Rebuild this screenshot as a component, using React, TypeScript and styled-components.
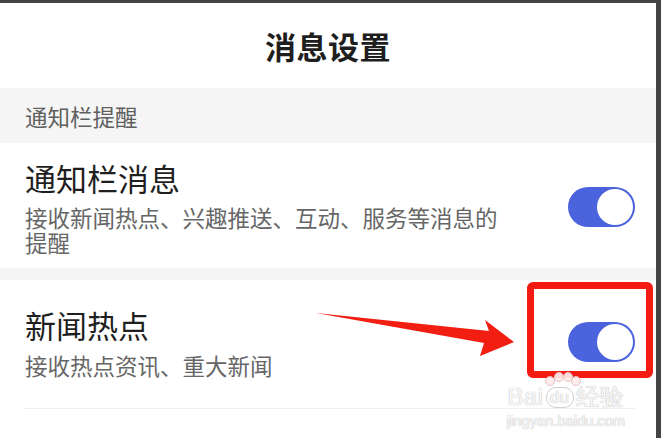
import styled, { createGlobalStyle } from "styled-components";

const GlobalStyle = createGlobalStyle`
  html, body {
    margin: 0;
    padding: 0;
    background: #ffffff;
  }
  body {
    font-family: "Noto Sans CJK SC", "Noto Sans", sans-serif;
  }
`;

export default function App() {
  return (
    <Screen>
      <GlobalStyle />
      <Header>
        <Title>消息设置</Title>
      </Header>

      <SectionLabel>通知栏提醒</SectionLabel>

      <SettingRow $padTop={15} $padBottom={13}>
        <RowText>
          <RowTitle>通知栏消息</RowTitle>
          <RowDesc $gap={7}>接收新闻热点、兴趣推送、互动、服务等消息的提醒</RowDesc>
        </RowText>
        <Toggle>
          <Knob />
        </Toggle>
      </SettingRow>

      <GroupGap />

      <SettingRow $padTop={25} $padBottom={30} $divider>
        <RowText>
          <RowTitle>新闻热点</RowTitle>
          <RowDesc $gap={8}>接收热点资讯、重大新闻</RowDesc>
        </RowText>
        <Toggle>
          <Knob />
        </Toggle>
      </SettingRow>

      <HighlightBox />
      <Arrow viewBox="0 0 661 438">
        <polygon points="316,313 489,331 485,320 514,342 480,356 484,343" />
      </Arrow>

      <Watermark>
        <Paw>
          <svg width="38" height="14" viewBox="0 0 38 14">
            <circle cx="6" cy="9" r="4.5" />
            <circle cx="15" cy="5" r="4.5" />
            <circle cx="24" cy="5" r="4.5" />
            <circle cx="32" cy="9" r="4.5" />
          </svg>
        </Paw>
        <Brand>
          Bai<BrandDu>du</BrandDu>经验
        </Brand>
        <Domain>jingyan.baidu.com</Domain>
      </Watermark>
    </Screen>
  );
}

const Screen = styled.div`
  position: relative;
  width: 661px;
  height: 438px;
  box-sizing: border-box;
  border-top: 3px solid #444444;
  border-right: 5px solid #444444;
  background: #ffffff;
  overflow: hidden;
  display: flex;
  flex-direction: column;
`;

const Header = styled.header`
  height: 85px;
  display: flex;
  align-items: center;
  justify-content: center;
`;

const Title = styled.h1`
  margin: 0;
  font-size: 31px;
  line-height: 40px;
  font-weight: 700;
  color: #1e1e1e;
  letter-spacing: 0.5px;
`;

const SectionLabel = styled.div`
  height: 55px;
  padding-left: 25px;
  display: flex;
  align-items: center;
  background: #f5f5f5;
  font-size: 22.5px;
  color: #5f5f5f;
`;

const SettingRow = styled.div<{ $padTop: number; $padBottom: number; $divider?: boolean }>`
  display: flex;
  align-items: center;
  justify-content: space-between;
  margin: 0 21px 0 25px;
  padding: ${(p) => p.$padTop}px 0 ${(p) => p.$padBottom}px;
  border-bottom: ${(p) => (p.$divider ? "1px solid #efefef" : "none")};
`;

const RowText = styled.div`
  display: flex;
  flex-direction: column;
  max-width: 490px;
`;

const RowTitle = styled.div`
  font-size: 31px;
  line-height: 40px;
  color: #1f1f1f;
`;

const RowDesc = styled.div<{ $gap: number }>`
  margin-top: ${(p) => p.$gap}px;
  font-size: 22.5px;
  line-height: 25px;
  color: #666666;
`;

const Toggle = styled.div`
  position: relative;
  width: 67px;
  height: 40px;
  border-radius: 20px;
  background: #4b63dc;
  flex-shrink: 0;
`;

const Knob = styled.div`
  position: absolute;
  top: 2px;
  right: 2px;
  width: 36px;
  height: 36px;
  border-radius: 50%;
  background: #ffffff;
`;

const GroupGap = styled.div`
  height: 12px;
  background: #f5f5f5;
`;

const HighlightBox = styled.div`
  position: absolute;
  left: 527px;
  top: 279px;
  width: 126px;
  height: 96px;
  box-sizing: border-box;
  border: 7px solid #f41c12;
  border-radius: 6px;
`;

const Arrow = styled.svg`
  position: absolute;
  left: 0;
  top: -3px;
  width: 661px;
  height: 438px;
  fill: #f21e12;
  pointer-events: none;
`;

const Watermark = styled.div`
  position: absolute;
  left: 504px;
  top: 369px;
  width: 124px;
  display: flex;
  flex-direction: column;
  align-items: center;
  color: rgba(255, 255, 255, 0.9);
  font-family: "Liberation Sans", Arial, sans-serif;
  text-shadow: 0 0 1px #bdbdbd, 0 0 1px #bdbdbd;
`;

const Paw = styled.div`
  height: 13px;
  margin-left: -6px;
  svg {
    fill: rgba(255, 236, 236, 0.92);
    stroke: #e2c4c4;
    stroke-width: 1;
  }
`;

const Brand = styled.div`
  font-size: 24px;
  line-height: 24px;
  font-weight: 400;
  letter-spacing: 0.5px;
  white-space: nowrap;
`;

const BrandDu = styled.span`
  display: inline-block;
  font-size: 17px;
  line-height: 19px;
  padding: 0 3px;
  margin: 0 2px;
  border: 1px solid #cfcfcf;
  border-radius: 10px;
  vertical-align: 2px;
`;

const Domain = styled.div`
  margin-top: 5px;
  font-size: 14.5px;
  line-height: 14px;
  letter-spacing: 0.1px;
  white-space: nowrap;
`;
